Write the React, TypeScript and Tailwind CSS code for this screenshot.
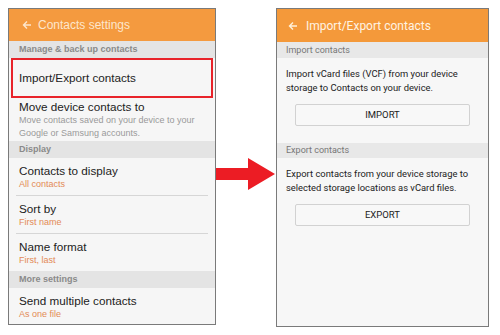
import React from 'react';

const Section = ({ label }: { label: string }) => (
  <div className="h-[17px] shrink-0 bg-[#e4e4e4] pl-[10px] text-[9px] font-bold leading-[17px] text-[#8a8a8a]">{label}</div>
);

const Item = ({ title, sub }: { title: string; sub?: string }) => (
  <div className="mx-[7px] flex h-[37px] shrink-0 flex-col justify-center pl-[3px]">
    <div className="text-[11.7px] leading-[15px] text-[#222]">{title}</div>
    {sub && <div className="text-[9px] leading-[12px] text-[#e38a55]">{sub}</div>}
  </div>
);

const Divider = () => <div className="mx-[7px] h-px shrink-0 bg-[#d6d6d6]" />;

const BackArrow = ({ color }: { color: string }) => (
  <svg width="10" height="10" viewBox="0 0 10 10" fill="none" stroke={color} strokeWidth="1.4">
    <path d="M9 5H1.5M5 1.5L1.5 5L5 8.5" />
  </svg>
);

const App = () => {
  return (
    <div className="flex h-[335px] w-[500px] bg-white pl-[8px] pt-[8px]" style={{ fontFamily: '"Liberation Sans", Arial, sans-serif' }}>
      {/* left phone */}
      <div className="flex h-[317px] w-[208px] flex-col overflow-hidden border border-[#7a7a7a] bg-[#f6f6f6]">
        <div className="flex h-[32px] shrink-0 items-center gap-[6px] bg-[#f49a3f] pl-[13px] text-[12px] text-[#fde6cc]">
          <BackArrow color="#fde6cc" />
          <span>Contacts settings</span>
        </div>
        <Section label="Manage & back up contacts" />
        <div className="mx-[2px] flex h-[40px] shrink-0 items-center border-2 border-[#e8232a] pl-[6px] text-[11.7px] text-[#222]">
          Import/Export contacts
        </div>
        <div className="mx-[7px] shrink-0 pl-[3px] pt-[1px] pb-[1px]">
          <div className="text-[11.7px] leading-[15px] text-[#222]">Move device contacts to</div>
          <div className="text-[9px] leading-[13px] text-[#9a9a9a]">
            Move contacts saved on your device to your
            <br />
            Google or Samsung accounts.
          </div>
        </div>
        <Section label="Display" />
        <Item title="Contacts to display" sub="All contacts" />
        <Divider />
        <Item title="Sort by" sub="First name" />
        <Divider />
        <Item title="Name format" sub="First, last" />
        <Section label="More settings" />
        <Item title="Send multiple contacts" sub="As one file" />
      </div>

      {/* arrow */}
      <div className="flex w-[60px] items-start pt-[150px]">
        <svg width="60" height="34" viewBox="0 0 60 34">
          <path d="M0 10H32V0L59 16L32 32V22H0Z" fill="#ec1c24" />
        </svg>
      </div>

      {/* right phone */}
      <div className="flex h-[319px] w-[213px] flex-col overflow-hidden border border-[#7a7a7a] bg-[#f7f7f7]" style={{ fontFamily: 'Roboto, "Noto Sans", sans-serif' }}>
        <div className="flex h-[33px] shrink-0 items-center gap-[8px] bg-[#f4993a] pl-[11px] text-[12px] text-[#fff3e3]">
          <BackArrow color="#fff0d8" />
          <span>Import/Export contacts</span>
        </div>
        <div className="h-[16px] bg-[#e8e8e8] pl-[9px] text-[9px] leading-[16px] text-[#777]">Import contacts</div>
        <div className="whitespace-nowrap px-[9px] pt-[9px] text-[9.4px] leading-[14px] text-[#222]">
          Import vCard files (VCF) from your device
          <br />
          storage to Contacts on your device.
        </div>
        <div className="mx-[18px] mt-[9px] flex h-[22px] items-center justify-center rounded-[2px] border border-[#d2d2d2] bg-[#f8f8f8] text-[9.5px] text-[#222]">
          IMPORT
        </div>
        <div className="mt-[17px] h-[15px] bg-[#e8e8e8] pl-[9px] text-[9px] leading-[15px] text-[#777]">Export contacts</div>
        <div className="whitespace-nowrap px-[9px] pt-[9px] text-[9.4px] leading-[14px] text-[#222]">
          Export contacts from your device storage to
          <br />
          selected storage locations as vCard files.
        </div>
        <div className="mx-[18px] mt-[9px] flex h-[22px] items-center justify-center rounded-[2px] border border-[#d2d2d2] bg-[#f8f8f8] text-[9.5px] text-[#222]">
          EXPORT
        </div>
      </div>
    </div>
  );
};

export default App;
